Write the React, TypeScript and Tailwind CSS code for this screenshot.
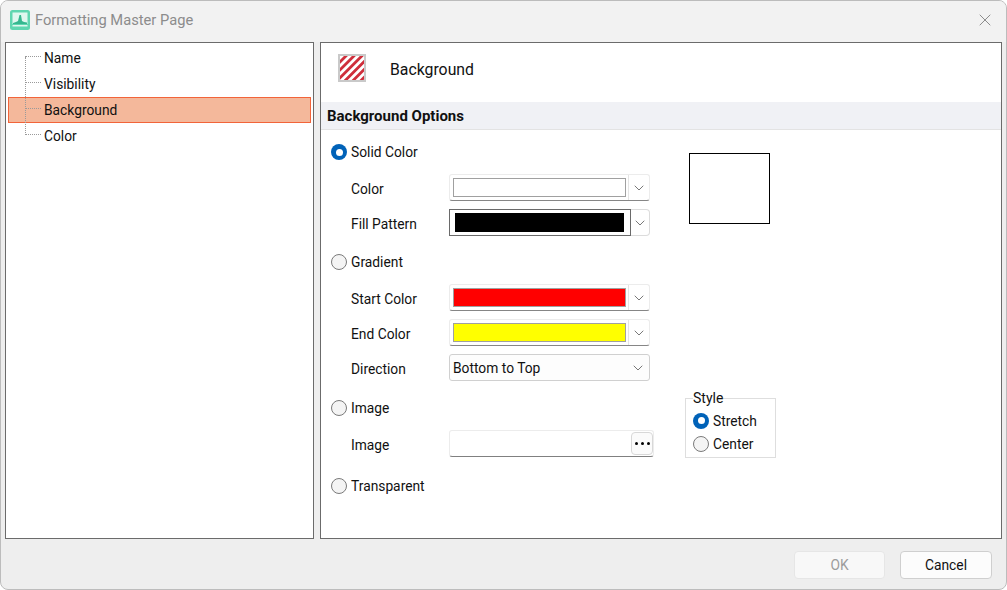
import { ChevronDown, X } from 'lucide-react';

const treeItems = ['Name', 'Visibility', 'Background', 'Color'];

const AppIcon = () => (
  <svg width="20" height="20" viewBox="0 0 20 20">
    <rect x="0" y="0" width="20" height="20" rx="2.5" fill="#5fd6b0" />
    <rect x="2.5" y="2.5" width="15" height="11.5" fill="#dff7ef" />
    <path d="M3 13 L6 12 L8 11 L9.5 5 L11 5 L12 11 L14 12 L17 12.5 L17 14 L3 14 Z" fill="#35b78f" />
    <rect x="2.5" y="15" width="15" height="1.5" fill="#dff7ef" />
  </svg>
);

const HatchIcon = () => (
  <svg width="28" height="28" viewBox="0 0 28 28">
    <defs>
      <pattern id="hatch" width="5.6" height="5.6" patternUnits="userSpaceOnUse" patternTransform="rotate(45)">
        <rect width="5.6" height="5.6" fill="#ffffff" />
        <rect width="2.8" height="5.6" fill="#cf2f3c" />
      </pattern>
    </defs>
    <rect width="28" height="28" fill="#c9c9c9" />
    <rect x="2" y="2" width="24" height="24" fill="url(#hatch)" />
  </svg>
);

const Radio = ({ checked }: { checked?: boolean }) =>
  checked ? (
    <span className="flex h-4 w-4 shrink-0 items-center justify-center rounded-full bg-[#0062b8]">
      <span className="h-[7px] w-[7px] rounded-full bg-white" />
    </span>
  ) : (
    <span className="h-4 w-4 shrink-0 rounded-full border border-[#7a7a7a] bg-[#f4f4f4]" />
  );

const RadioRow = ({ label, checked, className }: { label: string; checked?: boolean; className: string }) => (
  <div className={`flex h-[26px] items-center gap-1 pl-[10px] ${className}`}>
    <Radio checked={checked} />
    <span>{label}</span>
  </div>
);

const FieldRow = ({ label, className, children }: { label: string; className: string; children: React.ReactNode }) => (
  <div className={`flex h-[27px] items-center ${className}`}>
    <span className="mt-[3px] w-[128px] shrink-0 pl-[30px]">{label}</span>
    {children}
  </div>
);

const ColorCombo = ({ swatch }: { swatch: string }) => (
  <div className="flex h-[27px] w-[201px] rounded-[3px] border border-[#ececec] border-b-[#868686] bg-white">
    <div className="flex flex-1 items-center pl-[3px]">
      <div className={`h-[19px] w-[173px] border border-[#a0a0a0] ${swatch}`} />
    </div>
    <div className="flex w-[21px] items-center justify-center border-l border-[#e4e4e4]">
      <ChevronDown size={16} strokeWidth={1} color="#333333" />
    </div>
  </div>
);

const App = () => {
  return (
    <div className="flex h-[590px] w-[1007px] flex-col overflow-hidden rounded-[8px] border border-[#bcbcbc] bg-[#eeeeee] font-['Roboto',sans-serif] text-[13.8px] leading-[20px] text-[#111111]">
      {/* title bar */}
      <div className="flex h-[41px] shrink-0 items-center bg-[#f2f2f2] pb-[3px] pl-[9px] pr-[11px]">
        <AppIcon />
        <span className="ml-[5px] text-[14.7px] text-[#8c8c8c]">Formatting Master Page</span>
        <X className="ml-auto" size={20} strokeWidth={1} color="#777777" />
      </div>

      <div className="flex h-[497px] shrink-0 gap-[6px] px-[4px]">
        {/* tree */}
        <div className="w-[309px] shrink-0 border border-[#6b6b6b] bg-white px-[2px] pt-[2px]">
          <div className="relative">
            <div className="absolute left-[17px] top-[12px] h-[78px] border-l border-dotted border-[#9a9a9a]" />
            {treeItems.map((item) => (
              <div
                key={item}
                className={`flex h-[26px] items-center ${item === 'Background' ? 'border border-[#f2643a] bg-[#f4b89b] pl-[16px]' : 'pl-[17px]'}`}
              >
                <span className="mr-[3px] mt-[-3px] w-[16px] border-t border-dotted border-[#9a9a9a]" />
                <span>{item}</span>
              </div>
            ))}
          </div>
        </div>

        {/* options */}
        <div className="flex flex-1 flex-col border border-[#6b6b6b] bg-white">
          <div className="flex h-[59px] shrink-0 items-center pb-[9px] pl-[17px]">
            <HatchIcon />
            <span className="ml-[24px] mt-[3px] text-[15.8px]">Background</span>
          </div>
          <div className="flex h-[28px] shrink-0 items-center border-b border-[#e3e3e3] bg-[#f0f1f5] pl-[6px] text-[15px] font-bold">
            Background Options
          </div>
          <div className="flex flex-1">
            <div className="w-[335px] shrink-0 pt-[9px]">
              <RadioRow label="Solid Color" checked className="" />
              <FieldRow label="Color" className="mt-[9px]">
                <ColorCombo swatch="bg-white" />
              </FieldRow>
              <FieldRow label="Fill Pattern" className="mt-[8px]">
                <div className="flex h-[27px] w-[201px]">
                  <div className="flex w-[182px] items-center border border-[#6a6a6a] bg-white pl-[5px]">
                    <div className="h-[19px] w-[169px] bg-black" />
                  </div>
                  <div className="flex flex-1 items-center justify-center rounded-r-[4px] border border-l-0 border-[#dcdcdc]">
                    <ChevronDown size={16} strokeWidth={1} color="#333333" />
                  </div>
                </div>
              </FieldRow>
              <RadioRow label="Gradient" className="mt-[13px]" />
              <FieldRow label="Start Color" className="mt-[9px]">
                <ColorCombo swatch="bg-[#ff0000]" />
              </FieldRow>
              <FieldRow label="End Color" className="mt-[8px]">
                <ColorCombo swatch="bg-[#ffff00]" />
              </FieldRow>
              <FieldRow label="Direction" className="mt-[8px]">
                <div className="flex h-[27px] w-[201px] items-center justify-between rounded-[3px] border border-[#d0d0d0] bg-[#fdfdfd] px-[3px]">
                  <span>Bottom to Top</span>
                  <ChevronDown size={16} strokeWidth={1} color="#333333" />
                </div>
              </FieldRow>
              <RadioRow label="Image" className="mt-[14px]" />
              <FieldRow label="Image" className="mt-[9px]">
                <div className="flex h-[27px] w-[205px] items-center justify-end rounded-[3px] border border-[#ececec] border-b-[#808080] bg-white">
                  <div className="flex h-[23px] w-[22px] items-center justify-center gap-[3px] rounded-[4px] border border-[#d8d8d8] bg-[#fbfbfb]">
                    <span className="h-[3px] w-[3px] rounded-full bg-black" />
                    <span className="h-[3px] w-[3px] rounded-full bg-black" />
                    <span className="h-[3px] w-[3px] rounded-full bg-black" />
                  </div>
                </div>
              </FieldRow>
              <RadioRow label="Transparent" className="mt-[16px]" />
            </div>

            <div className="flex flex-col">
              <div className="ml-[33px] mt-[23px] h-[71px] w-[81px] border border-black bg-white" />
              <fieldset className="ml-[29px] mt-[166px] h-[68px] w-[91px] border border-[#dedede] pl-[7px] pt-[3px]">
                <legend className="px-0 text-[14px] leading-[16px]">Style</legend>
                <div className="flex h-[23px] items-center gap-1">
                  <Radio checked />
                  <span>Stretch</span>
                </div>
                <div className="flex h-[23px] items-center gap-1">
                  <Radio />
                  <span>Center</span>
                </div>
              </fieldset>
            </div>
          </div>
        </div>
      </div>

      {/* footer */}
      <div className="flex flex-1 items-start justify-end gap-[15px] pr-[14px] pt-[12px]">
        <div className="flex h-[28px] w-[91px] items-center justify-center rounded-[4px] border border-[#e6e6e6] bg-[#f8f8f8] text-[#9c9c9c]">
          OK
        </div>
        <div className="flex h-[28px] w-[92px] items-center justify-center rounded-[4px] border border-[#cfcfcf] bg-[#fcfcfc]">
          Cancel
        </div>
      </div>
    </div>
  );
};

export default App;
